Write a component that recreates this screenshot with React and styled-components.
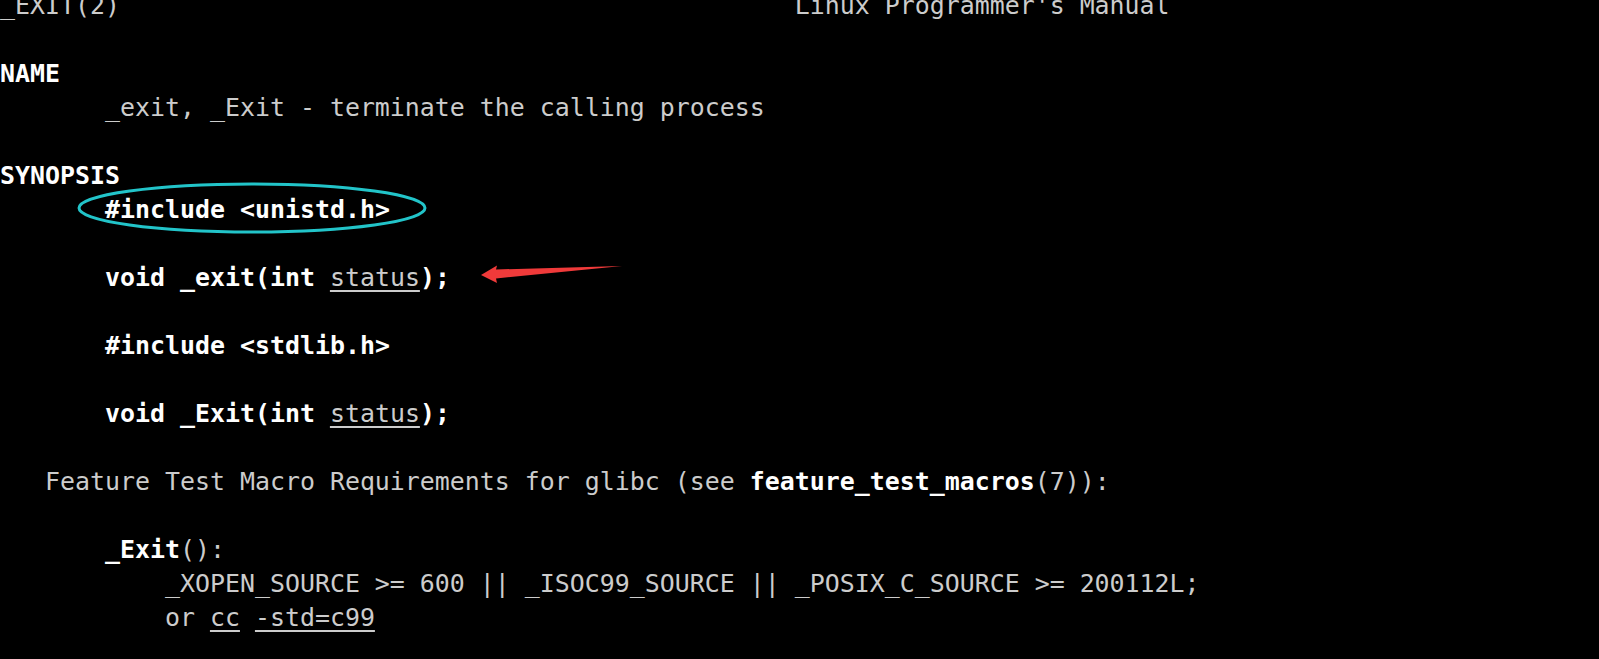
import styled, { createGlobalStyle } from 'styled-components'

const GlobalStyle = createGlobalStyle`
  html, body {
    margin: 0;
    padding: 0;
    background: #000;
    overflow: hidden;
  }
`

const Page = styled.main`
  position: relative;
  width: 1599px;
  height: 659px;
  background: #000;
  overflow: hidden;
`

// terminal text grid, 15px cells, 34px rows
const Screen = styled.pre`
  margin: -11px 0 0 0;
  padding: 0;
  font-family: 'DejaVu Sans Mono', 'Liberation Mono', monospace;
  font-size: 24.91px;
  line-height: 34px;
  color: #cccccc;
  white-space: pre;
`

const Line = styled.div`
  height: 34px;
`

const Bold = styled.b`
  font-weight: 700;
  color: #ffffff;
`

const Arg = styled.span`
  font-weight: 400;
  color: #cccccc;
  text-decoration: underline;
  text-decoration-thickness: 2px;
  text-underline-offset: 4px;
`

const Marks = styled.svg`
  position: absolute;
  top: 0;
  left: 0;
  pointer-events: none;
`

const lines = [
  <>{'_EXIT(2)' + ' '.repeat(45) + "Linux Programmer's Manual"}</>,
  null,
  <Bold>NAME</Bold>,
  <>{'       _exit, _Exit - terminate the calling process'}</>,
  null,
  <Bold>SYNOPSIS</Bold>,
  <>{'       '}<Bold>#include &lt;unistd.h&gt;</Bold></>,
  null,
  <>{'       '}<Bold>void _exit(int </Bold><Arg>status</Arg><Bold>);</Bold></>,
  null,
  <>{'       '}<Bold>#include &lt;stdlib.h&gt;</Bold></>,
  null,
  <>{'       '}<Bold>void _Exit(int </Bold><Arg>status</Arg><Bold>);</Bold></>,
  null,
  <>{'   Feature Test Macro Requirements for glibc (see '}<Bold>feature_test_macros</Bold>{'(7)):'}</>,
  null,
  <>{'       '}<Bold>_Exit</Bold>{'():'}</>,
  <>{'           _XOPEN_SOURCE >= 600 || _ISOC99_SOURCE || _POSIX_C_SOURCE >= 200112L;'}</>,
  <>{'           or '}<Arg>cc</Arg>{' '}<Arg>-std=c99</Arg></>,
]

export default function App() {
  return (
    <>
      <GlobalStyle />
      <Page>
        <Screen>
          {lines.map((content, i) => (
            <Line key={i}>{content}</Line>
          ))}
        </Screen>
        <Marks width="1599" height="659" viewBox="0 0 1599 659">
          <ellipse cx="252" cy="208" rx="173" ry="24" fill="none" stroke="#22c4c9" strokeWidth="3" />
          <polygon
            points="481,275 497,265.5 496,269.5 622,266 496,278.5 497,283"
            fill="#f03a3a"
          />
        </Marks>
      </Page>
    </>
  )
}
